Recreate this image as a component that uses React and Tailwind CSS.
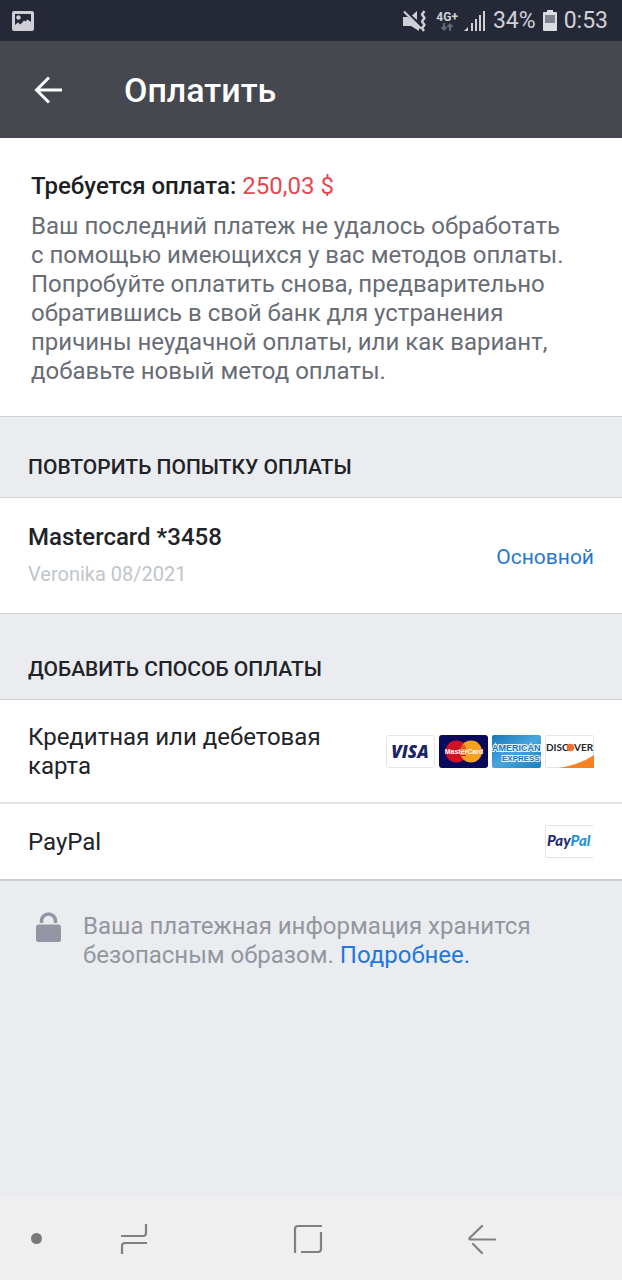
import clsx from "clsx";

// ====== status bar icons ======
function PictureIcon() {
  return (
    <svg width="22" height="20" viewBox="0 0 22 20" aria-hidden="true">
      <path
        fill="#cfcdd6"
        fillRule="evenodd"
        d="M2 0h18a2 2 0 0 1 2 2v16a2 2 0 0 1-2 2H2a2 2 0 0 1-2-2V2a2 2 0 0 1 2-2zM3 3v11l3-2.500 2.500 2L12 9.500l1.500 1 2-2L19 11V3z"
      />
      <circle cx="6.500" cy="6.500" r="2.200" fill="#cfcdd6" />
    </svg>
  );
}

function MutedIcon() {
  return (
    <svg width="23" height="22" viewBox="0 0 23 22" fill="none" aria-hidden="true">
      <path fill="#cfcfd6" d="M0 7h5l11 9.500V21l-8-5H0zM9 5.500L14 1v9z" />
      <path stroke="#cfcfd6" strokeWidth="2.200" d="M1 1.500l17 17" />
      <path stroke="#cfcfd6" strokeWidth="2.400" strokeLinejoin="round" d="M21.500 1l-2.500 3.500 2.500 3.500-2.500 3.500 2.500 3.500-2.500 3 2 3" />
    </svg>
  );
}

function DataArrowsIcon() {
  return (
    <svg width="12" height="8" viewBox="0 0 12 8" fill="none" stroke="#656874" strokeWidth="2" aria-hidden="true">
      <path d="M3 0v6M.5 4L3 6.500 5.500 4M9 8V1.500M6.500 4L9 1.500 11.500 4" />
    </svg>
  );
}

function SignalIcon() {
  return (
    <svg width="21" height="20" viewBox="0 0 21 20" fill="none" stroke="#cfcfd6" strokeWidth="2" aria-hidden="true">
      <path fill="#cfcfd6" stroke="none" d="M0 20l4-4v4z" />
      <path d="M8 20v-8M12 20V8M16 20V4M20 20V0" />
    </svg>
  );
}

function BatteryIcon() {
  return (
    <svg width="14" height="21" viewBox="0 0 14 21" aria-hidden="true">
      <path fill="#dcdce2" d="M4 0h6v2h3a1 1 0 0 1 1 1v17a1 1 0 0 1-1 1H1a1 1 0 0 1-1-1V3a1 1 0 0 1 1-1h3z" />
      <path fill="#80828c" d="M2 5h10v8H2z" />
    </svg>
  );
}

// ====== page icons ======
function BackIcon() {
  return (
    <svg width="30" height="28" viewBox="0 0 30 28" fill="none" stroke="#ffffff" strokeWidth="3" aria-hidden="true">
      <path d="M16 1.500L3.500 14 16 26.500M3 14h26" />
    </svg>
  );
}

function LockIcon() {
  return (
    <svg width="26" height="30" viewBox="0 0 26 30" aria-hidden="true">
      <path fill="none" stroke="#9297a3" strokeWidth="3.500" d="M5.500 11V9a7 7 0 0 1 14 0v2" />
      <rect y="12.500" width="25" height="17.500" rx="2.500" fill="#9297a3" />
    </svg>
  );
}

// ====== payment logos ======
function VisaLogo() {
  return (
    <svg width="49" height="33" viewBox="0 0 49 33" role="img" aria-label="Visa">
      <rect x=".5" y=".5" width="48" height="32" rx="2" fill="#fff" stroke="#e6e6e8" />
      <text x="24" y="23" textAnchor="middle" fill="#1c2468" fontFamily="Open Sans, sans-serif" fontSize="17" fontWeight="800" fontStyle="italic">
        VISA
      </text>
    </svg>
  );
}

function MastercardLogo() {
  return (
    <svg width="49" height="33" viewBox="0 0 49 33" role="img" aria-label="MasterCard">
      <rect width="49" height="33" rx="3" fill="#0a0a5c" />
      <circle cx="17.500" cy="16.500" r="11" fill="#cf1126" />
      <circle cx="32" cy="16.500" r="11" fill="#f7a120" />
      <path stroke="#cf1126" strokeWidth="1" d="M21 13h6M21 15.500h6M21 18h6M22 20.500h5M22 11h4" />
      <text x="25" y="19" textAnchor="middle" fill="#fff" fontFamily="Liberation Sans, sans-serif" fontSize="7" fontWeight="700">
        MasterCard
      </text>
    </svg>
  );
}

function AmexLogo() {
  return (
    <svg width="49" height="33" viewBox="0 0 49 33" role="img" aria-label="American Express">
      <defs>
        <linearGradient id="amex" x1="0" y1="0" x2="1" y2="1">
          <stop offset="0" stopColor="#1277b8" />
          <stop offset=".5" stopColor="#4aa5dc" />
          <stop offset="1" stopColor="#1b7fc0" />
        </linearGradient>
      </defs>
      <rect width="49" height="33" rx="2" fill="url(#amex)" />
      <g fill="#1b76b8" stroke="#e8f5fc" strokeWidth="2" paintOrder="stroke" fontFamily="Liberation Sans, sans-serif" fontSize="9" fontWeight="700">
        <text x="0" y="16">AMERICAN</text>
        <text x="10" y="26" fontSize="8">EXPRESS</text>
      </g>
    </svg>
  );
}

function DiscoverLogo() {
  return (
    <svg width="49" height="33" viewBox="0 0 49 33" role="img" aria-label="Discover">
      <rect x=".5" y=".5" width="48" height="32" rx="1" fill="#fff" stroke="#e6e6e8" />
      <path fill="#f58220" d="M13 33C28 31 40 26 49 20v13z" />
      <g fill="#26262a" fontFamily="Lato, sans-serif" fontSize="10" fontWeight="700">
        <text x="1" y="16">DISC</text>
        <text x="29" y="16">VER</text>
      </g>
      <circle cx="25.500" cy="12.500" r="3.800" fill="#f07030" />
    </svg>
  );
}

function PaypalLogo() {
  return (
    <svg width="49" height="33" viewBox="0 0 49 33" role="img" aria-label="PayPal">
      <path fill="#fff" stroke="#e2e2e4" d="M48 .5H2a1.500 1.500 0 0 0-1.500 1.500v29A1.500 1.500 0 0 0 2 32.500h46" />
      <text x="2" y="21" fontFamily="Lato, sans-serif" fontSize="15" fontWeight="900" fontStyle="italic">
        <tspan fill="#222d72">Pay</tspan>
        <tspan fill="#1f94d2">Pal</tspan>
      </text>
    </svg>
  );
}

const methods = [
  { id: "card", label: "Кредитная или дебетовая карта", logos: [VisaLogo, MastercardLogo, AmexLogo, DiscoverLogo] },
  { id: "paypal", label: "PayPal", logos: [PaypalLogo] },
];

function SectionTitle({ className, children }) {
  return (
    <h2 className={clsx("flex items-end px-7 text-[21px] leading-6 font-medium text-[#212328]", className)}>
      {children}
    </h2>
  );
}

function StatusBar() {
  return (
    <div className="flex h-[41px] items-center justify-between bg-[#252937] pr-[14px] pl-3 text-[#d0d0d7]">
      <PictureIcon />
      <div className="flex items-center">
        <MutedIcon />
        <div className="ml-[10px] flex flex-col items-center">
          <span className="text-[12px] leading-3 font-bold">4G+</span>
          <DataArrowsIcon />
        </div>
        <div className="ml-[6px]">
          <SignalIcon />
        </div>
        <span className="ml-2 text-[23px] leading-6">34%</span>
        <div className="mx-[7px]">
          <BatteryIcon />
        </div>
        <span className="text-[23px] leading-6">0:53</span>
      </div>
    </div>
  );
}

function SystemNav() {
  return (
    <nav className="flex h-[83px] items-center bg-[#efefef] pr-[53px] pl-[30px]" aria-label="Система">
      <button aria-label="Скрыть панель" className="flex w-3 justify-center">
        <span className="size-[11px] rounded-full bg-[#7a7a7a]" />
      </button>
      <div className="ml-[5px] flex flex-1 justify-around">
        <button aria-label="Недавние">
          <svg width="30" height="32" viewBox="0 0 30 32" fill="none" stroke="#808080" strokeWidth="2.200">
            <path d="M2 13h22a3 3 0 0 0 3-3V1M28 20H6a3 3 0 0 0-3 3v8" />
          </svg>
        </button>
        <button aria-label="Домой">
          <svg width="30" height="30" viewBox="0 0 30 30" fill="none" stroke="#808080" strokeWidth="2.200">
            <path d="M2 29V5a3 3 0 0 1 3-3h24M28 8v17a3 3 0 0 1-3 3H8" />
          </svg>
        </button>
        <button aria-label="Назад">
          <svg width="30" height="30" viewBox="0 0 30 30" fill="none" stroke="#808080" strokeWidth="2.200" strokeLinecap="round">
            <path d="M15 2L2.500 14q-.5 1.500 1 1.500H28M6 20l9 9" />
          </svg>
        </button>
      </div>
    </nav>
  );
}

export default function App() {
  return (
    <div className="flex min-h-screen flex-col bg-[#eaecf0] font-['Roboto',sans-serif]">
      <StatusBar />

      <header className="flex h-[97px] items-center bg-[#45484f] pl-[33px] text-white">
        <button aria-label="Вернуться">
          <BackIcon />
        </button>
        <h1 className="ml-[61px] text-[34px] leading-10 font-medium">Оплатить</h1>
      </header>

      <main className="flex-1">
        {/* сумма к оплате */}
        <section className="border-b border-[#cfd1d6] bg-white pt-[34px] pr-11 pb-[30px] pl-[31px] text-[24px]">
          <p className="leading-7 font-medium text-[#1d1f23]">
            Требуется оплата: <span className="font-normal text-[#e5484f]">250,03 $</span>
          </p>
          <p className="mt-3 leading-[29px] text-[#686d75]">
            Ваш последний платеж не удалось обработать с помощью имеющихся у вас методов оплаты. Попробуйте оплатить
            снова, предварительно обратившись в свой банк для устранения причины неудачной оплаты, или как вариант,
            добавьте новый метод оплаты.
          </p>
        </section>

        <SectionTitle className="h-[80px] pb-[18px]">ПОВТОРИТЬ ПОПЫТКУ ОПЛАТЫ</SectionTitle>
        <button className="flex w-full items-center justify-between border-y border-[#cfd1d6] bg-white px-7 pt-[25px] pb-[27px] text-left">
          <span className="flex flex-col">
            <span className="text-[24px] leading-7 font-medium text-[#212328]">Mastercard *3458</span>
            <span className="mt-[11px] text-[20px] leading-6 text-[#c0c5cb]">Veronika 08/2021</span>
          </span>
          <span className="pt-1 text-[21px] leading-6 text-[#1f78d1]">Основной</span>
        </button>

        <SectionTitle className="h-[85px] pb-[18px]">ДОБАВИТЬ СПОСОБ ОПЛАТЫ</SectionTitle>
        <ul className="divide-y-2 divide-[#e4e5e8] border-t border-b-2 border-t-[#cfd1d6] border-b-[#cbcccf] bg-white">
          {methods.map((m) => (
            <li key={m.id}>
              <button className="flex w-full items-center justify-between px-7 py-[21px] text-left">
                <span className="max-w-[320px] pt-[2px] text-[24px] leading-[29px] text-[#212328]">{m.label}</span>
                <span className="flex shrink-0 gap-1">
                  {m.logos.map((Logo, i) => (
                    <Logo key={i} />
                  ))}
                </span>
              </button>
            </li>
          ))}
        </ul>

        <div className="flex items-start gap-[21px] px-9 pt-[31px]">
          <LockIcon />
          <p className="max-w-[480px] text-[24px] leading-[29px] text-[#92979f]">
            Ваша платежная информация хранится безопасным образом.{" "}
            <a href="#more" className="text-[#1f78e0]">
              Подробнее.
            </a>
          </p>
        </div>
      </main>

      <SystemNav />
    </div>
  );
}
